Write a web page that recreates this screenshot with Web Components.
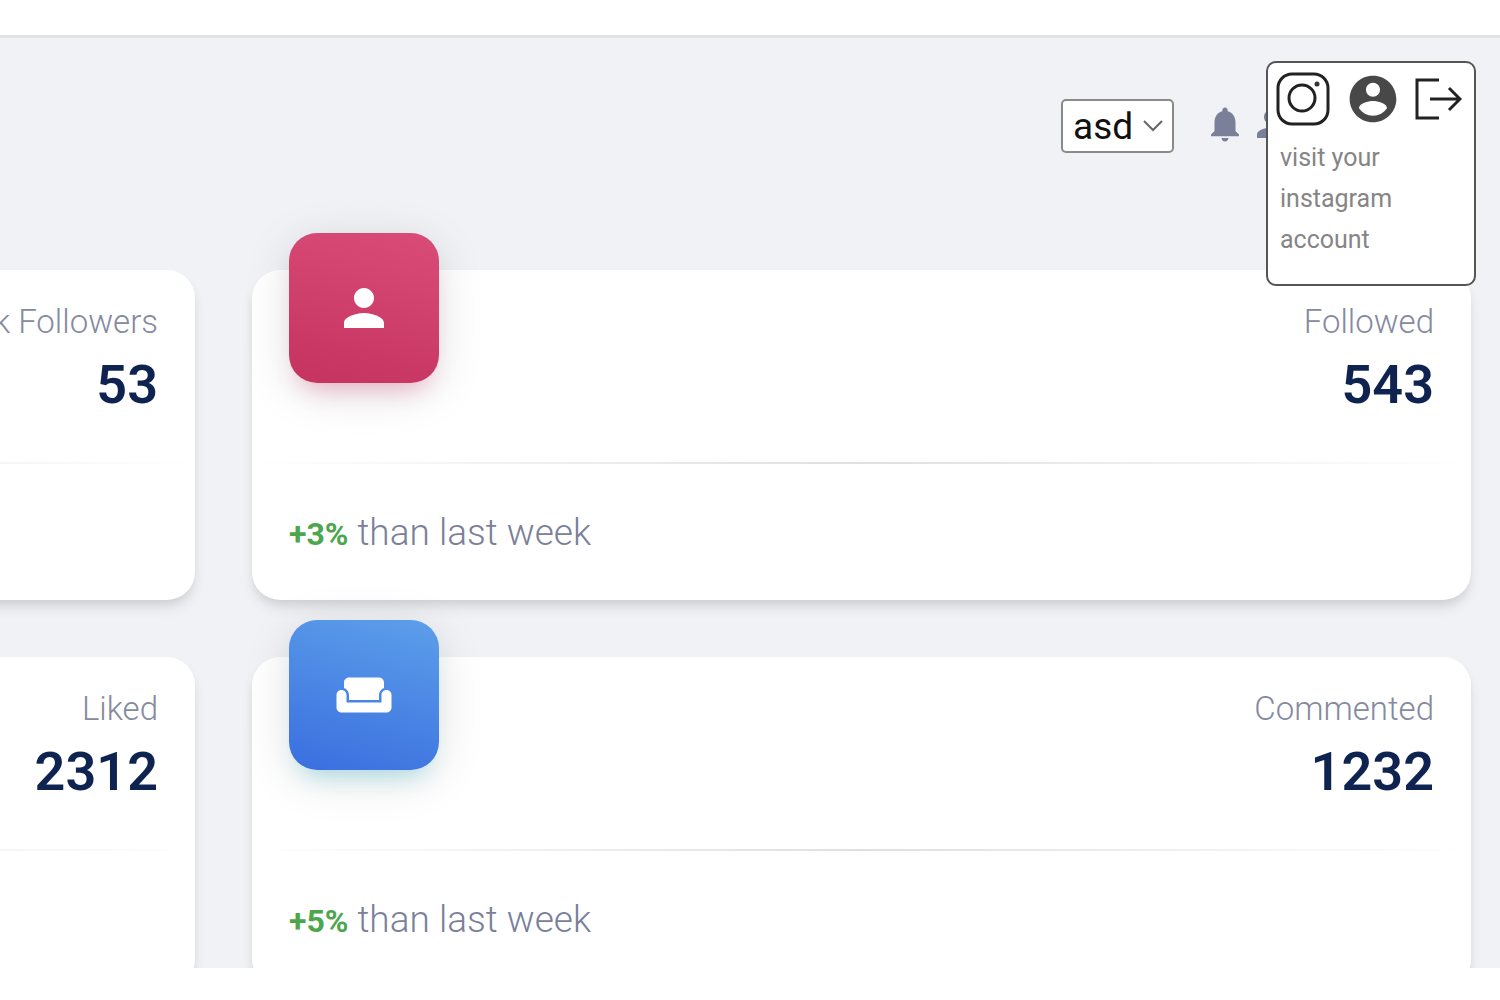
<!DOCTYPE html>
<html lang="en">
<head>
<meta charset="utf-8">
<title>Dashboard</title>
<style>
  body {
    margin: 0;
    background: #fff;
    font-family: Roboto, "Liberation Sans", sans-serif;
  }
</style>
</head>
<body>
<dashboard-shell>
  <dashboard-header slot="header">
    <account-menu></account-menu>
  </dashboard-header>
  <stat-card label="k Followers" value="53"></stat-card>
  <stat-card label="Followed" value="543" icon="person" color="pink">
    <b slot="change">+3%</b> than last week
  </stat-card>
  <stat-card label="Liked" value="2312"></stat-card>
  <stat-card label="Commented" value="1232" icon="weekend" color="blue">
    <b slot="change">+5%</b> than last week
  </stat-card>
</dashboard-shell>

<script>
const ICONS = {
  person: '<path d="M12 12c2.21 0 4-1.79 4-4s-1.79-4-4-4-4 1.79-4 4 1.79 4 4 4zm0 2c-2.67 0-8 1.34-8 4v2h16v-2c0-2.66-5.33-4-8-4z"/>',
  weekend: '<path d="M21 10c-1.1 0-2 .9-2 2v3H5v-3c0-1.1-.9-2-2-2s-2 .9-2 2v5c0 1.1.9 2 2 2h18c1.1 0 2-.9 2-2v-5c0-1.1-.9-2-2-2zm-3-5H6c-1.1 0-2 .9-2 2v2.15c1.16.41 2 1.51 2 2.82V14h12v-2.03c0-1.3.84-2.4 2-2.82V7c0-1.1-.9-2-2-2z"/>',
  bell: '<path d="M12 22c1.1 0 2-.9 2-2h-4c0 1.1.89 2 2 2zm6-6v-5c0-3.07-1.64-5.64-4.5-6.32V4c0-.83-.67-1.5-1.5-1.5s-1.5.67-1.5 1.5v.68C7.63 5.36 6 7.92 6 11v5l-2 2v1h16v-1l-2-2z"/>',
  account: '<path d="M12 2C6.48 2 2 6.48 2 12s4.48 10 10 10 10-4.48 10-10S17.52 2 12 2zm0 3c1.66 0 3 1.34 3 3s-1.34 3-3 3-3-1.34-3-3 1.34-3 3-3zm0 14.2c-2.5 0-4.71-1.28-6-3.22.03-1.99 4-3.08 6-3.08 1.99 0 5.97 1.09 6 3.08-1.29 1.94-3.5 3.22-6 3.22z"/>'
};

const svg = (name) => `<svg viewBox="0 0 24 24" aria-hidden="true">${ICONS[name]}</svg>`;

class DashboardShell extends HTMLElement {
  constructor() {
    super();
    this.attachShadow({ mode: "open" });
    this.shadowRoot.innerHTML = `
      <style>
        :host {
          display: flex;
          flex-direction: column;
          box-sizing: border-box;
          height: 100vh;
          padding: 35px 0 32px;
        }

        main {
          flex: 1;
          min-height: 0;
          overflow: hidden;
          position: relative;
          background: #f0f2f5;
          border-top: 3px solid #e0e2e4;
        }

        /* The first column runs out past the left edge */
        .grid {
          display: grid;
          grid-template-columns: repeat(2, calc(100% - 252px));
          justify-content: end;
          gap: 57px;
          padding-right: 29px;
        }
      </style>
      <main>
        <slot name="header"></slot>
        <div class="grid"><slot></slot></div>
      </main>
    `;
  }
}

class DashboardHeader extends HTMLElement {
  constructor() {
    super();
    this.attachShadow({ mode: "open" });
    this.shadowRoot.innerHTML = `
      <style>
        :host {
          display: flex;
          justify-content: flex-end;
          align-items: center;
          padding: 61px 208px 117px 0;
        }

        .picker {
          position: relative;
          margin-right: 30px;
        }

        select {
          appearance: none;
          display: block;
          box-sizing: border-box;
          width: 113px;
          height: 54px;
          padding: 2px 0 0 10px;
          border: 2px solid #8a8a8a;
          border-radius: 5px;
          background: #fff;
          color: #111;
          font: 400 37px/48px Roboto, "Liberation Sans", sans-serif;
        }

        .picker svg {
          position: absolute;
          right: 11px;
          top: 20px;
          width: 20px;
          height: 14px;
          fill: none;
          stroke: #666;
          stroke-width: 2;
          pointer-events: none;
        }

        button {
          padding: 0;
          margin: 0 4px 4px 0;
          border: 0;
          background: none;
          color: #7b809a;
          cursor: pointer;
        }

        button:last-of-type {
          margin-right: 0;
        }

        button svg {
          display: block;
          width: 42px;
          height: 42px;
          fill: currentColor;
        }
      </style>
      <div class="picker">
        <select aria-label="Account"><option>asd</option></select>
        <svg viewBox="0 0 20 14" aria-hidden="true"><path d="M1 2l9 9 9-9"/></svg>
      </div>
      <button aria-label="Notifications">${svg("bell")}</button>
      <button aria-label="Profile">${svg("person")}</button>
      <slot></slot>
    `;
  }
}

class AccountMenu extends HTMLElement {
  constructor() {
    super();
    this.attachShadow({ mode: "open" });
    this.shadowRoot.innerHTML = `
      <style>
        :host {
          position: absolute;
          z-index: 2;
          top: 23px;
          right: 24px;
          box-sizing: border-box;
          width: 210px;
          padding: 8px 12px 24px 8px;
          border: 2px solid #555;
          border-radius: 10px;
          background: #fff;
        }

        .actions {
          display: flex;
          justify-content: space-between;
          align-items: center;
        }

        a,
        button {
          display: block;
          padding: 0;
          border: 0;
          background: none;
          color: #484848;
          cursor: pointer;
        }

        svg {
          display: block;
          width: 56px;
          height: 56px;
          fill: currentColor;
        }

        .line {
          fill: none;
          stroke: #222;
          stroke-width: 3;
        }

        .logout,
        .logout svg {
          width: 48px;
        }

        p {
          margin: 10px 0 0 4px;
          width: 140px;
          color: #858585;
          font-size: 25px;
          line-height: 41px;
        }
      </style>
      <div class="actions">
        <a href="#instagram" aria-label="Instagram">
          <svg class="line" viewBox="0 0 56 56">
            <rect x="2" y="3" width="50" height="50" rx="14"/>
            <circle cx="26" cy="27" r="13"/>
            <circle cx="41" cy="13" r="2.5" fill="#333" stroke="none"/>
          </svg>
        </a>
        <button aria-label="Account">${svg("account")}</button>
        <button class="logout" aria-label="Log out">
          <svg class="line" viewBox="0 0 48 56">
            <path d="M25 9H3v38h22" />
            <path d="M16 28h30M35 17l11 11-11 11"/>
          </svg>
        </button>
      </div>
      <p>visit your instagram account</p>
    `;
  }
}

class StatCard extends HTMLElement {
  constructor() {
    super();
    this.attachShadow({ mode: "open" });
  }

  connectedCallback() {
    const icon = this.getAttribute("icon");

    this.shadowRoot.innerHTML = `
      <style>
        :host {
          display: block;
          border-radius: 28px;
          background: #fff;
          box-shadow: 0 9px 14px -2px rgba(0,0,0,0.1), 0 5px 9px -2px rgba(0,0,0,0.06);
        }

        .head {
          display: flex;
          justify-content: space-between;
          padding: 0 37px;
          height: 192px;
        }

        .tile {
          display: flex;
          justify-content: center;
          align-items: center;
          width: 150px;
          height: 150px;
          margin-top: -37px;
          border-radius: 28px;
          background: linear-gradient(195deg, #da4c78, #c53360);
          box-shadow: 0 9px 47px rgba(0,0,0,0.12), 0 16px 23px -12px rgba(233,30,99,0.3);
        }

        :host([color="blue"]) .tile {
          background: linear-gradient(195deg, #5c9fea, #3a6edf);
          box-shadow: 0 9px 47px rgba(0,0,0,0.12), 0 16px 23px -12px rgba(0,188,212,0.3);
        }

        .tile svg {
          width: 60px;
          height: 60px;
          fill: #fff;
        }

        .stat {
          margin-left: auto;
          padding-top: 27px;
          text-align: right;
          white-space: nowrap;
        }

        .label {
          color: #858a9f;
          font-size: 33px;
          font-weight: 300;
          line-height: 50px;
        }

        .value {
          color: #0f2350;
          font-size: 54px;
          font-weight: 600;
          line-height: 76px;
        }

        hr {
          height: 2px;
          margin: 0;
          border: 0;
          background: linear-gradient(90deg, transparent, #dedfe2, transparent);
        }

        .foot {
          min-height: 50px;
          padding: 44px 37px 42px;
          color: #7b809a;
          font-size: 37px;
          font-weight: 300;
          line-height: 50px;
        }

        ::slotted(b) {
          color: #4ca64c;
          font-size: 32px;
          font-weight: 700;
          line-height: 32px;
        }
      </style>
      <div class="head">
        ${icon ? `<div class="tile">${svg(icon)}</div>` : ""}
        <div class="stat">
          <div class="label">${this.getAttribute("label")}</div>
          <div class="value">${this.getAttribute("value")}</div>
        </div>
      </div>
      <hr>
      <div class="foot"><slot name="change"></slot> <slot></slot></div>
    `;
  }
}

customElements.define("dashboard-shell", DashboardShell);
customElements.define("dashboard-header", DashboardHeader);
customElements.define("account-menu", AccountMenu);
customElements.define("stat-card", StatCard);
</script>
</body>
</html>
